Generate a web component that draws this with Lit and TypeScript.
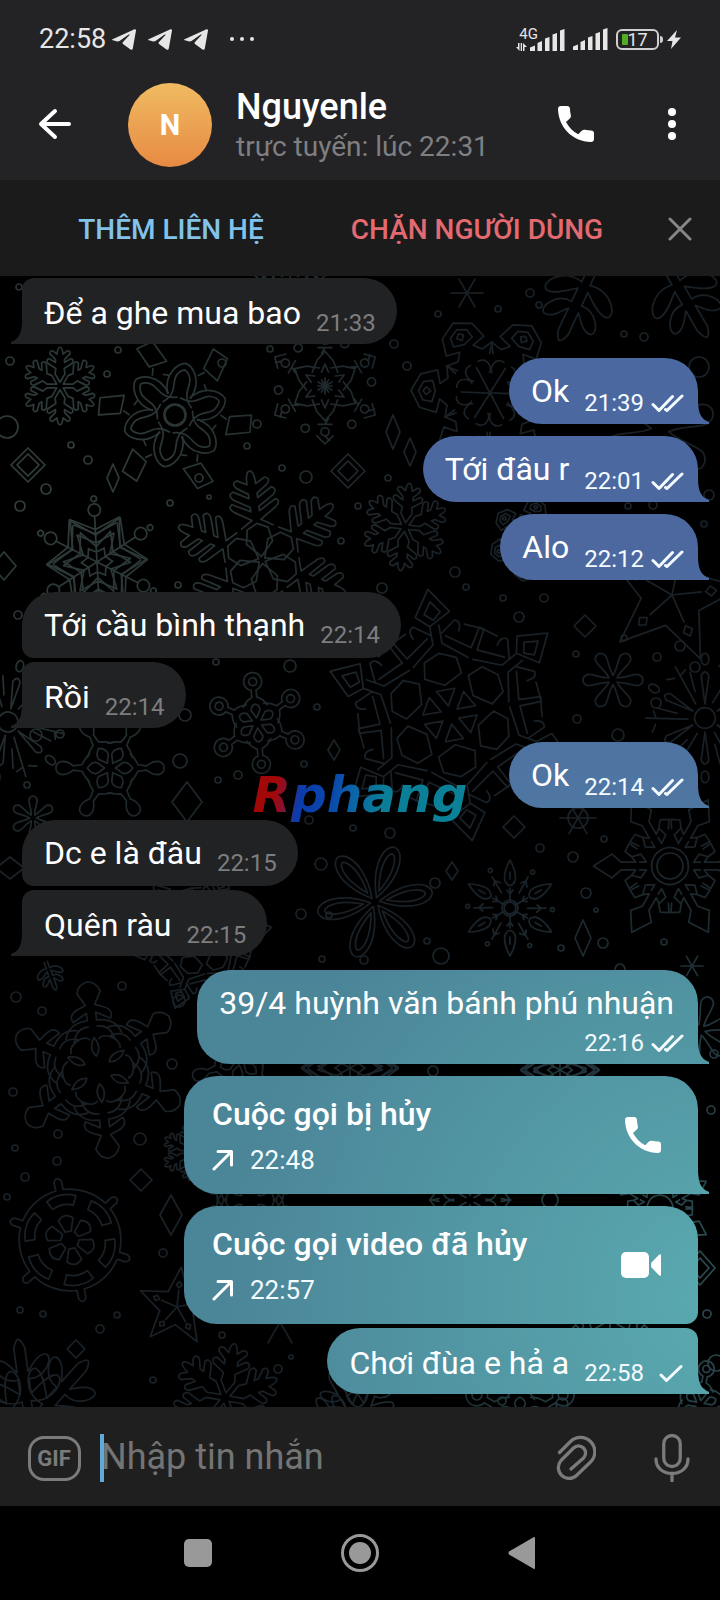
import { LitElement, html, svg, css, nothing } from "lit";
import { customElement, property } from "lit/decorators.js";
import { classMap } from "lit/directives/class-map.js";

type Motif = keyof typeof ARMS;

/* One arm of every snowflake, pointing up from the centre, 100 units long. */
const ARMS = {
  frost:
    "M0 -10L-13 -32L-11 -46L-32 -60Q-38 -70 -28 -72L-12 -62L-12 -70L-26 -84Q-28 -94 -18 -92L-8 -84Q-6 -102 0 -102Q6 -102 8 -84L18 -92Q28 -94 26 -84L12 -70L12 -62L28 -72Q38 -70 32 -60L11 -46L13 -32Z",
  loops:
    "M-18 -30C-30 -60 -10 -78 0 -80C10 -78 30 -60 18 -30M-22 -16C-2 -34 -16 -48 -10 -60Q-6 -68 0 -70Q6 -68 10 -60C16 -48 2 -34 22 -16M38 -48L34 -54M0 -15A15 15 0 0 1 13 -8M22 -66L30 -72M28 -78L52 -64L60 -100L36 -110Z",
  shards:
    "M0 -3V-14M-6 -24L0 -38L6 -24M-22 -24L-14 -44L0 -60L14 -44L22 -24M-12 -66H12M-6 -56L0 -66M0 -86A7 7 0 1 1 0 -72A7 7 0 1 1 0 -86M-14 -86L0 -100L14 -86M34 -66A7 7 0 1 1 34 -80A7 7 0 1 1 34 -66M-8 -94L0 -86",
  star:
    "M-33 -50L0 -34L33 -50M-14 -24L0 -18L14 -24M0 0V-82M-44 -78L0 -58L44 -78M-38 -68L0 -50L38 -68M0 -104A11 11 0 1 1 0 -82A11 11 0 1 1 0 -104M0 -118A5 5 0 1 1 0 -108A5 5 0 1 1 0 -118M-44 -78L-42 -24M44 -78L42 -24M-33 -50L-24 -14M33 -50L24 -14",
  fir:
    "M0 -4L-15 -20L-12 -36L0 -42L12 -36L15 -20ZM-18 -38L-5 -46L-24 -58Q-31 -64 -25 -67L-5 -56V-61L-23 -72Q-29 -78 -22 -81L-5 -71V-76L-18 -85Q-23 -91 -16 -93L-5 -87Q-5 -102 0 -102Q5 -102 5 -87L16 -93Q23 -91 18 -85L5 -76V-71L22 -81Q29 -78 23 -72L5 -61V-56L25 -67Q31 -64 24 -58L5 -46L18 -38",
  crest:
    "M0 -8V-38M-6 -44C-20 -44 -18 -28 -12 -24M6 -44C20 -44 18 -28 12 -24M-24 -46L-34 -58L-18 -56L-10 -66L-28 -70L-22 -92L0 -104L22 -92L28 -70L10 -66L18 -56L34 -58L24 -46M0 -94L-12 -88L-14 -76L0 -72L14 -76L12 -88ZM0 -88L-5 -84L0 -78L5 -84Z",
  lattice:
    "M0 -8L-8 -22H8ZM0 -26L-16 -34L-14 -48L0 -54L14 -48L16 -34ZM-24 -46L-4 -62V-78M24 -46L4 -62V-78M-28 -54L-8 -68M28 -54L8 -68M-4 -70L-18 -80Q-24 -78 -20 -70M4 -70L18 -80Q24 -78 20 -70M-4 -78L-15 -88L0 -110L15 -88ZM0 -99L-7 -89L0 -83L7 -89ZM-28 -54L-38 -70L-52 -60M28 -54L38 -70L52 -60",
  ring:
    "M0 -10L-9 -26Q-8 -36 0 -38Q8 -36 9 -26ZM-5 -66V-52Q-18 -46 -24 -34M5 -66V-52Q18 -46 24 -34M-5 -66A18 18 0 1 1 5 -66M0 -75A8 8 0 1 1 0 -91A8 8 0 1 1 0 -75",
  blob:
    "M0 -10L-10 -24Q-12 -34 0 -42Q12 -34 10 -24ZM-4 -68L-6 -52Q-18 -46 -26 -38M4 -68L6 -52Q18 -46 26 -38M-4 -68C-18 -86 -12 -100 0 -100C12 -100 18 -86 4 -68",
  petal:
    "M0 -8C-16 -36 -24 -70 -12 -92Q0 -108 12 -92C24 -70 16 -36 0 -8ZM0 -20C-8 -42 -12 -66 -6 -82Q0 -94 6 -82C12 -66 8 -42 0 -20Z",
  drop: "M-8 -14C-6 -40 -22 -70 -18 -86Q-12 -100 0 -100Q12 -100 18 -86C22 -70 6 -40 8 -14",
  burst:
    "M0 -16A16 16 0 0 1 14 -8M0 -22L-6 -66Q0 -78 6 -66ZM12 -24L46 -80M-6 -92A6 9 0 1 1 6 -92A6 9 0 1 1 -6 -92M30 -72L22 -82M40 -66L50 -64M28 -34L50 -56",
  spark:
    "M0 -12A12 12 0 0 1 10 -6M0 -16V-40M-10 -54Q0 -36 10 -54Q14 -70 0 -96Q-14 -70 -10 -54ZM0 -58V-72M18 -30L36 -62M22 -50L32 -54L34 -42M43 -75A4 4 0 1 1 42 -74M-6 -36L0 -28L6 -36",
  gear:
    "M0 -28A28 28 0 0 1 24 -14M-6 -36L-18 -44L-14 -58L-6 -52V-74M6 -36L18 -44L14 -58L6 -52V-74M-6 -36V-46M6 -36V-46M-6 -74L-18 -88L0 -116L18 -88L6 -74M-26 -50L-34 -62L-22 -68L-14 -58M26 -50L34 -62L22 -68L14 -58",
  wave:
    "M0 -18Q-9 -28 0 -42Q9 -28 0 -18M-6 -56Q-22 -56 -26 -38Q-12 -46 -6 -40M6 -56Q22 -56 26 -38Q12 -46 6 -40M-6 -74V-64Q-30 -64 -36 -44M6 -74V-64Q30 -64 36 -44M-6 -74L-24 -64Q-30 -74 -16 -80L-6 -84L-15 -100Q-12 -112 0 -114Q12 -112 15 -100L6 -84L16 -80Q30 -74 24 -64L6 -74",
  wheel:
    "M-5 -14L-12 -34Q0 -46 12 -34L5 -14ZM-17 -54Q0 -62 17 -54L24 -68Q0 -80 -24 -68ZM-41 -71A82 82 0 0 1 -6 -82V-96Q0 -106 6 -96V-82A82 82 0 0 1 41 -71",
  point: "M-26 -36L0 -100L26 -36M0 0V-42M-7 -56L0 -64L7 -56L0 -48Z",
  leaf:
    "M-5 -6V-26C-30 -20 -46 -46 -36 -50C-26 -52 -12 -38 -6 -34V-50C-24 -48 -36 -70 -28 -74C-18 -76 -10 -62 -6 -58V-84Q0 -104 6 -84V-58C10 -62 18 -76 28 -74C36 -70 24 -48 6 -50V-34C12 -38 26 -52 36 -50C46 -46 30 -20 5 -26V-6",
};

/* [arm, x, y, radius, turn, arms] */
const FLAKES: [Motif, number, number, number, number, number][] = [
  ["frost", 60, 386, 38, 0, 6],
  ["loops", 175, 415, 66, 12, 6],
  ["shards", 325, 386, 58, 0, 6],
  ["star", 97, 562, 56, -3, 6],
  ["fir", 262, 560, 88, -8, 6],
  ["frost", 405, 527, 43, 6, 6],
  ["crest", 490, 393, 76, -28, 6],
  ["leaf", 596, 262, 92, 205, 1],
  ["leaf", 664, 262, 92, 150, 1],
  ["drop", 660, 430, 56, 10, 6],
  ["point", 672, 595, 70, 12, 5],
  ["crest", 530, 540, 40, 10, 6],
  ["burst", 8, 722, 62, 12, 6],
  ["ring", 257, 723, 50, -6, 6],
  ["blob", 110, 768, 54, 30, 6],
  ["lattice", 450, 715, 116, -10, 6],
  ["drop", 613, 680, 30, 30, 6],
  ["burst", 705, 718, 64, 0, 6],
  ["drop", 33, 818, 22, 0, 6],
  ["petal", 375, 902, 58, 20, 6],
  ["spark", 510, 908, 50, 0, 6],
  ["gear", 670, 866, 66, 30, 6],
  ["lattice", 200, 940, 66, 20, 6],
  ["star", 290, 262, 60, 0, 6],
  ["leaf", 45, 960, 34, 160, 1],
  ["wave", 98, 1070, 78, -7, 6],
  ["wheel", 70, 1240, 62, -12, 6],
  ["point", 177, 1307, 40, 6, 5],
  ["leaf", 30, 1425, 92, -8, 3],
  ["frost", 225, 1398, 54, 10, 6],
  ["frost", 190, 1152, 28, 0, 6],
  ["blob", 240, 1060, 50, 10, 6],
  ["leaf", 360, 1425, 64, -30, 3],
  ["star", 350, 1068, 54, 0, 6],
  ["wave", 250, 1200, 52, 0, 6],
  ["crest", 470, 1200, 60, 0, 6],
  ["star", 560, 1070, 44, 0, 6],
  ["drop", 700, 1030, 34, 15, 6],
  ["drop", 620, 990, 26, 0, 6],
  ["gear", 660, 1208, 46, 0, 6],
  ["ring", 520, 1420, 60, 0, 6],
  ["ring", 700, 1405, 44, 10, 6],
  ["crest", 610, 1320, 46, 0, 6],
];

/* Plain asterisks: [x, y, radius] */
const ASTERISKS: [number, number, number][] = [
  [467, 293, 16], [490, 393, 6], [325, 386, 7], [578, 818, 18], [692, 966, 11], [280, 1322, 24],
];

/* [x, y, half width, half height] */
const DIAMONDS: [number, number, number, number][] = [
  [28, 465, 17, 17], [28, 465, 11, 11], [348, 471, 17, 17], [348, 471, 10, 10],
  [113, 478, 6, 14], [393, 432, 7, 17], [410, 452, 6, 14], [585, 626, 11, 11],
  [187, 802, 15, 20], [334, 750, 6, 10], [514, 827, 11, 11], [583, 938, 8, 18],
  [452, 871, 6, 9], [10, 868, 14, 11], [141, 1180, 11, 11], [171, 1215, 11, 20],
  [76, 1349, 9, 9], [700, 1268, 15, 17], [700, 1268, 9, 10], [4, 566, 12, 14],
];

/* [x, y, radius] */
const DOTS: [number, number, number][] = [
  [19, 287, 3], [10, 361, 4], [118, 350, 3], [107, 374, 3], [222, 363, 4], [270, 349, 3],
  [394, 344, 4], [7, 427, 11], [257, 424, 4], [247, 446, 3], [71, 445, 3], [88, 460, 4],
  [46, 489, 5], [20, 506, 5], [170, 503, 3], [199, 478, 4], [209, 497, 2], [282, 468, 3],
  [306, 477, 6], [358, 506, 3], [341, 541, 3], [178, 585, 3], [382, 588, 5], [18, 615, 4],
  [438, 314, 3], [498, 309, 3], [530, 293, 4], [539, 305, 3], [624, 334, 3], [644, 337, 4],
  [407, 366, 4], [699, 367, 10], [388, 478, 3], [455, 572, 5], [466, 587, 3], [544, 598, 4],
  [519, 617, 5], [503, 598, 3], [709, 495, 5], [653, 505, 4], [628, 506, 3], [704, 524, 3],
  [216, 662, 3], [290, 666, 6], [317, 707, 3], [185, 715, 6], [180, 761, 7], [60, 734, 4],
  [36, 735, 6], [27, 785, 3], [238, 775, 4], [218, 780, 3], [304, 764, 3], [309, 820, 4],
  [321, 864, 6], [301, 914, 5], [329, 915, 3], [364, 960, 4], [322, 959, 3], [353, 828, 3],
  [390, 833, 5], [624, 638, 3], [576, 654, 3], [680, 646, 5], [657, 657, 4], [577, 719, 4],
  [618, 735, 6], [695, 667, 5], [656, 703, 5], [573, 857, 5], [540, 848, 4], [604, 839, 3],
  [435, 883, 5], [586, 893, 5], [596, 910, 2], [603, 943, 5], [561, 948, 3], [664, 942, 3],
  [441, 956, 8], [427, 941, 3], [578, 818, 10], [175, 415, 11], [510, 908, 8], [670, 866, 13],
  [16, 997, 5], [42, 1011, 4], [122, 986, 4], [179, 1001, 6],
  [172, 1064, 5], [13, 1092, 4], [58, 1134, 4], [140, 1139, 6], [15, 1148, 3], [57, 1161, 4],
  [25, 1177, 4], [7, 1197, 3], [163, 1253, 4], [20, 1310, 3], [43, 1314, 3], [117, 1315, 3],
  [100, 1329, 4], [222, 1335, 3], [291, 1357, 2], [278, 1369, 4], [153, 1380, 3],
  [433, 1071, 5], [714, 1054, 4], [711, 1110, 4], [550, 1200, 8], [707, 1314, 4],
  [562, 1404, 6], [716, 1363, 8], [502, 1401, 4],
];

const phoneIcon = html`<svg class="phone" viewBox="0 0 36 36" aria-hidden="true">
  <path fill="currentColor" d="M3 0H9C10.800 0 12 1.200 12 3C12 5 12.300 7 12.800 9C13.100 10.400 12.800 11.600 11.800 12.600L8 16C11 21.500 15 25.600 20.200 28.200L24 24.600C25 23.700 26 23.500 27.200 23.800C29 24.300 31 24.500 33 24.500C35 24.500 36 25.700 36 27.500V33C36 35 34.800 36 33 36C14 35.500 .5 21 0 3C0 1.200 1.200 0 3 0Z"/>
</svg>`;

const videoIcon = html`<svg class="video" viewBox="0 0 40 26" aria-hidden="true">
  <rect width="28" height="26" rx="5" fill="currentColor" />
  <path fill="currentColor" d="M30.500 10.500L38 2.800Q40 1.200 40 3.500V22.500Q40 24.800 38 23.200L30.500 15.500Q29.500 13 30.500 10.500Z" />
</svg>`;

@customElement("snow-wallpaper")
class SnowWallpaper extends LitElement {
  static styles = css`
    :host { display: block; }
    svg { display: block; width: 100%; height: 100%; }
    .ink { fill: none; stroke: #fff; stroke-width: 1.7; stroke-linejoin: round; stroke-linecap: round; }
    .ink path { vector-effect: non-scaling-stroke; }
  `;

  private flake([arm, x, y, r, turn, count]: (typeof FLAKES)[number]) {
    return svg`<g transform="translate(${x} ${y}) rotate(${turn}) scale(${r / 100})">
      ${Array.from({ length: count }, (_, i) => {
        const step = count === 3 ? 50 : 360 / count;
        return svg`<path d=${ARMS[arm]} transform="rotate(${(count === 3 ? i - 1 : i) * step})" />`;
      })}
    </g>`;
  }

  render() {
    return html`<svg viewBox="0 276 720 1131" preserveAspectRatio="xMidYMin slice" aria-hidden="true">
      <defs>
        <radialGradient id="moss" gradientUnits="userSpaceOnUse" cx="40" cy="480" r="420">
          <stop offset="0" stop-color="#33403d" /><stop offset="1" stop-color="#33403d" stop-opacity="0" />
        </radialGradient>
        <radialGradient id="teal" gradientUnits="userSpaceOnUse" cx="720" cy="1260" r="440">
          <stop offset="0" stop-color="#2b4d53" /><stop offset="1" stop-color="#2b4d53" stop-opacity="0" />
        </radialGradient>
        <mask id="frost" maskUnits="userSpaceOnUse" x="0" y="276" width="720" height="1131">
          <g class="ink">
            ${FLAKES.map((f) => this.flake(f))}
            ${ASTERISKS.map(([x, y, r]) => svg`<path transform="translate(${x} ${y}) scale(${r / 10})" d="M-10 0H10M-5 -8.700L5 8.700M5 -8.700L-5 8.700" />`)}
            ${DIAMONDS.map(([x, y, w, h]) => svg`<path d="M${x} ${y - h}L${x + w} ${y}L${x} ${y + h}L${x - w} ${y}Z" />`)}
            ${DOTS.map(([x, y, r]) => svg`<circle cx=${x} cy=${y} r=${r} />`)}
          </g>
        </mask>
      </defs>
      <g mask="url(#frost)">
        <rect y="276" width="720" height="1131" fill="#192127" />
        <rect y="276" width="720" height="1131" fill="url(#moss)" />
        <rect y="276" width="720" height="1131" fill="url(#teal)" />
      </g>
    </svg>`;
  }
}

@customElement("status-bar")
class StatusBar extends LitElement {
  static styles = css`
    :host { display: flex; align-items: center; height: 58px; padding: 10px 39px 0; color: #e6e6e6; }
    .clock { font-size: 27px; line-height: 30px; }
    .planes { display: flex; gap: 12px; margin-left: 6px; }
    .plane { width: 24px; height: 21px; }
    .more { width: 26px; height: 6px; margin-left: 21px; }
    .right { display: flex; align-items: center; margin-left: auto; gap: 8px; }
    .cell { display: flex; align-items: flex-end; height: 24px; }
    .net { display: flex; flex-direction: column; align-items: flex-end; font-size: 15px; line-height: 15px; }
    .arrows { width: 11px; height: 8px; align-self: flex-start; margin: 1px 0 0 -3px; }
    .bars { width: 35px; height: 22px; }
    .cell .bars { margin-left: -8px; }
    .battery { position: relative; display: grid; place-items: center; box-sizing: border-box; width: 43px; height: 21px; border: 2px solid #cfcfcf; border-radius: 6px; font-size: 18px; line-height: 17px; }
    .battery::before { content: ""; position: absolute; left: 4px; top: 3px; width: 6px; height: 11px; border-radius: 1px; background: #4fae22; }
    .battery::after { content: ""; position: absolute; right: -6px; top: 5px; width: 3px; height: 7px; border-radius: 0 3px 3px 0; background: #cfcfcf; }
    .level { position: relative; }
    .bolt { width: 14px; height: 19px; }
    svg { display: block; fill: currentColor; }
  `;

  private bars() {
    return html`<svg class="bars" viewBox="0 0 35 22">
      <path d="M0 22V18.500L5 16.500V22ZM7.500 22V14L12 12V22ZM15 22V9.500L19.500 8V22ZM22.500 22V5.500L27 4V22ZM30 22V1.500L34.500 0V22Z" />
    </svg>`;
  }

  render() {
    return html`
      <time class="clock">22:58</time>
      <div class="planes">
        ${[0, 1, 2].map(() => html`<svg class="plane" viewBox="0 0 24 21"><path d="M0 10.500L22.500 .2Q24.200 0 24 1.500L20.800 19.500Q20.300 21.400 18.500 20.400L11 15Q10 14 11 13L17.500 6Q18 5 16.700 5.600L7.500 12Q6 12.800 4.500 12.300L.8 11.300Q-.2 11 0 10.500Z" /></svg>`)}
      </div>
      <svg class="more" viewBox="0 0 26 6"><circle cx="3" cy="3" r="2" /><circle cx="13" cy="3" r="2" /><circle cx="23" cy="3" r="2" /></svg>
      <div class="right">
        <div class="cell">
          <div class="net">4G<svg class="arrows" viewBox="0 0 11 8"><path d="M0 4H2V0H3.500V8ZM4.700 0H6V8H4.700ZM7 0V8H8.500V4H11Z" /></svg></div>
          ${this.bars()}
        </div>
        ${this.bars()}
        <div class="battery"><span class="level">17</span></div>
        <svg class="bolt" viewBox="0 0 14 19"><path d="M10 0L0 11H5.500L4 19L14 7.500H8Z" /></svg>
      </div>
    `;
  }
}

@customElement("chat-message")
class ChatMessage extends LitElement {
  @property({ type: Boolean, reflect: true }) out = false;
  @property({ type: Boolean, reflect: true }) first = false;
  @property({ type: Boolean, reflect: true }) last = false;
  @property({ type: Boolean }) stacked = false;
  @property() text = "";
  @property() time = "";
  @property() status = "";
  @property() call = "";

  static styles = css`
    :host { display: block; margin: 0 22px 4px; align-self: flex-start; }
    :host([last]) { margin-bottom: 14px; }
    :host([out]) { align-self: flex-end; }
    :host([out][last]) { margin-bottom: 12px; }
    .bubble { position: relative; display: flex; column-gap: 15px; padding: 0 21px 0 22px; border-radius: 12px 33px 33px 12px; background: #212224; color: #fff; }
    .out { padding-right: 14px; border-radius: 33px 12px 12px 33px;
      background: radial-gradient(circle 500px at 720px 1300px, #5aaab0, #5aaab000), linear-gradient(#4b68a1 24%, #4c689f 34%, #4f75a2 49%, #4b8598 62%, #4b8598 100%);
      background-attachment: fixed; }
    .first { border-top-left-radius: 33px; }
    .out.first { border-top-left-radius: 33px; border-top-right-radius: 33px; }
    .last { border-bottom-left-radius: 0; }
    .out.last { border-bottom-left-radius: 33px; border-bottom-right-radius: 0; }
    .last::after { content: ""; position: absolute; bottom: 0; right: 100%; width: 11px; height: 24px; background: inherit; clip-path: path("M11 0C11 13 8 19 0 22V24H11Z"); }
    .out.last::after { right: auto; left: 100%; clip-path: path("M0 0C0 13 3 19 11 22V24H0Z"); }
    .text { margin: 0; padding: 16px 0 12px; font-size: 32px; line-height: 38px; }
    .first .text { padding: 14px 0; }
    .meta { display: flex; align-items: center; align-self: flex-end; gap: 7px; padding-bottom: 9px; font-size: 24px; line-height: 28px; color: #7d7d7f; }
    .last .meta { padding-bottom: 7px; }
    .out .meta { color: #f4fbff; }
    .stacked { flex-direction: column; }
    .stacked .text { padding-bottom: 7px; margin-right: 10px; }
    .ticks { display: block; width: 33px; height: 18px; fill: none; stroke: currentColor; stroke-width: 3; stroke-linecap: round; stroke-linejoin: round; }
    .call { align-items: center; justify-content: space-between; box-sizing: border-box; width: 514px; max-width: 100%; height: 118px; padding: 0 37px 0 28px; }
    .title { margin: 0; font-size: 32px; line-height: 38px; font-weight: 500; }
    .when { display: flex; align-items: center; gap: 16px; margin-top: 11px; font-size: 26px; line-height: 32px; color: #f4fbff; }
    .arrow { width: 22px; height: 22px; fill: none; stroke: #fff; stroke-width: 3; stroke-linecap: round; stroke-linejoin: round; }
    .redial { display: grid; place-items: center; padding: 0; border: 0; background: none; color: #fff; }
    .phone { width: 36px; height: 36px; }
    .video { width: 40px; height: 26px; }
  `;

  private ticks() {
    if (!this.status) return nothing;
    const d = this.status === "read" ? "M2 10.500L8 16.500L21.500 2.500M14.500 15.500L16 16.500L31 2" : "M10 11L15.500 16.500L30 2.500";
    return html`<svg class="ticks" viewBox="0 0 33 18" role="img" aria-label=${this.status}><path d=${d} /></svg>`;
  }

  render() {
    const classes = { bubble: true, out: this.out, first: this.first, last: this.last, stacked: this.stacked, call: !!this.call };
    if (this.call) {
      return html`<div class=${classMap(classes)}>
        <div>
          <p class="title">${this.text}</p>
          <div class="when">
            <svg class="arrow" viewBox="0 0 22 22" aria-hidden="true"><path d="M2 20L19 3M6 2.500H19.500V16" /></svg>
            <time>${this.time}</time>
          </div>
        </div>
        <button class="redial" type="button" aria-label=${this.text}>${this.call === "video" ? videoIcon : phoneIcon}</button>
      </div>`;
    }
    return html`<div class=${classMap(classes)}>
      <p class="text">${this.text}</p>
      <div class="meta"><time>${this.time}</time>${this.ticks()}</div>
    </div>`;
  }
}

interface Message {
  text: string;
  time: string;
  out?: boolean;
  first?: boolean;
  last?: boolean;
  stacked?: boolean;
  status?: string;
  call?: string;
}

const MESSAGES: Message[] = [
  { text: "Để a ghe mua bao", time: "21:33", last: true },
  { text: "Ok", time: "21:39", out: true, first: true, last: true, status: "read" },
  { text: "Tới đâu r", time: "22:01", out: true, first: true, last: true, status: "read" },
  { text: "Alo", time: "22:12", out: true, first: true, last: true, status: "read" },
  { text: "Tới cầu bình thạnh", time: "22:14", first: true },
  { text: "Rồi", time: "22:14", last: true },
  { text: "Ok", time: "22:14", out: true, first: true, last: true, status: "read" },
  { text: "Dc e là đâu", time: "22:15", first: true },
  { text: "Quên ràu", time: "22:15", last: true },
  { text: "39/4 huỳnh văn bánh phú nhuận", time: "22:16", out: true, first: true, last: true, stacked: true, status: "read" },
  { text: "Cuộc gọi bị hủy", time: "22:48", out: true, first: true, last: true, call: "voice" },
  { text: "Cuộc gọi video đã hủy", time: "22:57", out: true, first: true, call: "video" },
  { text: "Chơi đùa e hả a", time: "22:58", out: true, last: true, status: "sent" },
];

@customElement("app-root")
class AppRoot extends LitElement {
  static styles = css`
    :host { position: relative; display: flex; flex-direction: column; min-height: 100vh; background: #000; color: #fff; font-family: Roboto, "Noto Sans", sans-serif; }
    button { display: grid; place-items: center; padding: 0; border: 0; background: none; color: inherit; font: inherit; }
    svg { display: block; }
    .top { background: #232325; }
    .bar { display: flex; align-items: center; height: 112px; }
    .back { width: 110px; height: 80px; }
    .back svg { width: 34px; height: 32px; fill: none; stroke: #fff; stroke-width: 4; stroke-linecap: round; stroke-linejoin: round; }
    .avatar { display: grid; place-items: center; width: 84px; height: 84px; margin: 2px 0 0 18px; border-radius: 50%; background: linear-gradient(#f0bb62, #e78a43); font-size: 29px; font-weight: 700; }
    .who { flex: 1; min-width: 0; margin-left: 24px; padding-top: 4px; }
    .name { margin: 0; font-size: 36px; line-height: 42px; font-weight: 500; }
    .seen { margin: 0; font-size: 28px; line-height: 38px; color: #7f7f81; }
    .dial { width: 96px; height: 80px; }
    .phone { width: 36px; height: 36px; }
    .menu { width: 96px; height: 80px; }
    .menu svg { width: 8px; height: 32px; fill: #fff; }
    .actions { display: flex; box-sizing: border-box; height: 96px; padding: 2px 0 0 18px; background: #1b1b1b; font-size: 28px; font-weight: 500; }
    .actions button { flex: 1; }
    .add { color: #82c3eb; }
    .block { color: #e26a70; }
    .actions .close { flex: none; width: 80px; margin-left: 10px; }
    .close svg { width: 24px; height: 24px; fill: none; stroke: #868686; stroke-width: 3; stroke-linecap: round; }
    .chat { position: relative; flex: 1; display: flex; flex-direction: column; padding: 2px 0 1px; overflow: hidden; }
    .wallpaper { position: absolute; inset: 0; }
    .brand { position: absolute; inset: 0; display: grid; place-items: center; padding-bottom: 10px; pointer-events: none; }
    .brand span { padding: 0 4px; font: italic 700 50px/58px "DejaVu Sans", sans-serif; color: transparent; background: linear-gradient(100deg, #a30808 13%, #8a1030 18%, #0c3bab 24%, #0a47ad 38%, #0b62a8 46%, #0b7d98 60%, #0b8297); background-clip: text; -webkit-background-clip: text; }
    .composer { display: flex; align-items: center; height: 99px; background: #1f1f1f; color: #7b7b7b; }
    .gif { box-sizing: border-box; width: 100px; height: 99px; padding: 3px 0 0 8px; }
    .gif span { box-sizing: border-box; width: 53px; height: 45px; border: 3px solid #7b7b7b; border-radius: 16px; font-size: 22px; line-height: 40px; font-weight: 700; text-align: center; }
    .field { position: relative; flex: 1; min-width: 0; }
    .field::before { content: ""; position: absolute; left: 0; top: 1px; width: 4px; height: 48px; background: #62a8d8; }
    .field input { display: block; box-sizing: border-box; width: 100%; height: 48px; padding: 0 0 0 1px; border: 0; outline: 0; background: none; color: #fff; font: 36px/48px Roboto, "Noto Sans", sans-serif; }
    .field input::placeholder { color: #747474; opacity: 1; }
    .tool { width: 96px; height: 99px; }
    .tool svg { width: 40px; height: 50px; fill: none; stroke: #7b7b7b; stroke-width: 3.3; stroke-linecap: round; }
    .nav { display: flex; justify-content: center; height: 94px; }
    .nav button { width: 162px; }
    .nav svg { width: 40px; height: 40px; fill: #999; }
  `;

  render() {
    return html`
      <header class="top">
        <status-bar></status-bar>
        <div class="bar">
          <button class="back" type="button" aria-label="Quay lại"><svg viewBox="0 0 34 32"><path d="M17 3L3 16L17 29M4 16H31" /></svg></button>
          <div class="avatar">N</div>
          <div class="who">
            <h1 class="name">Nguyenle</h1>
            <p class="seen">trực tuyến: lúc 22:31</p>
          </div>
          <button class="dial" type="button" aria-label="Gọi">${phoneIcon}</button>
          <button class="menu" type="button" aria-label="Menu"><svg viewBox="0 0 8 32"><circle cx="4" cy="4" r="4" /><circle cx="4" cy="16" r="4" /><circle cx="4" cy="28" r="4" /></svg></button>
        </div>
      </header>
      <div class="actions">
        <button class="add" type="button">THÊM LIÊN HỆ</button>
        <button class="block" type="button">CHẶN NGƯỜI DÙNG</button>
        <button class="close" type="button" aria-label="Đóng"><svg viewBox="0 0 24 24"><path d="M2 2L22 22M22 2L2 22" /></svg></button>
      </div>
      <main class="chat">
        <snow-wallpaper class="wallpaper"></snow-wallpaper>
        ${MESSAGES.map(
          (m) => html`<chat-message
            .text=${m.text} .time=${m.time} .status=${m.status ?? ""} .call=${m.call ?? ""}
            .stacked=${!!m.stacked} ?out=${m.out} ?first=${m.first} ?last=${m.last}></chat-message>`
        )}
      </main>
      <form class="composer">
        <button class="gif" type="button" aria-label="GIF"><span>GIF</span></button>
        <label class="field"><input type="text" aria-label="Nhập tin nhắn" placeholder="Nhập tin nhắn" /></label>
        <button class="tool" type="button" aria-label="Đính kèm"><svg viewBox="0 0 40 50"><path d="M3.500 20.500L14.500 9.500A14.200 14.200 0 0 1 34.500 30L20.500 43.500A10.800 10.800 0 0 1 5 28.500L17.500 16A7 7 0 0 1 27.500 26L15 37" /></svg></button>
        <button class="tool" type="button" aria-label="Ghi âm"><svg viewBox="0 0 40 50"><rect x="11.750" y="3.500" width="16.500" height="31" rx="8.250" /><path d="M4 27C4 36 11 41.500 20 41.500C29 41.500 36 36 36 27M20 42V49" /></svg></button>
      </form>
      <nav class="nav">
        <button type="button" aria-label="Gần đây"><svg viewBox="0 0 40 40"><rect x="6" y="6" width="28" height="28" rx="5" /></svg></button>
        <button type="button" aria-label="Trang chủ"><svg viewBox="0 0 40 40"><circle cx="20" cy="20" r="17.500" fill="none" stroke="#999" stroke-width="3" /><circle cx="20" cy="20" r="11" /></svg></button>
        <button type="button" aria-label="Trở lại"><svg viewBox="0 0 40 40"><path d="M7 18.500Q6 20 7 21.500L32 36Q33 36.300 33 35V5Q33 3.700 32 4Z" /></svg></button>
      </nav>
      <div class="brand"><span>Rphang</span></div>
    `;
  }
}
